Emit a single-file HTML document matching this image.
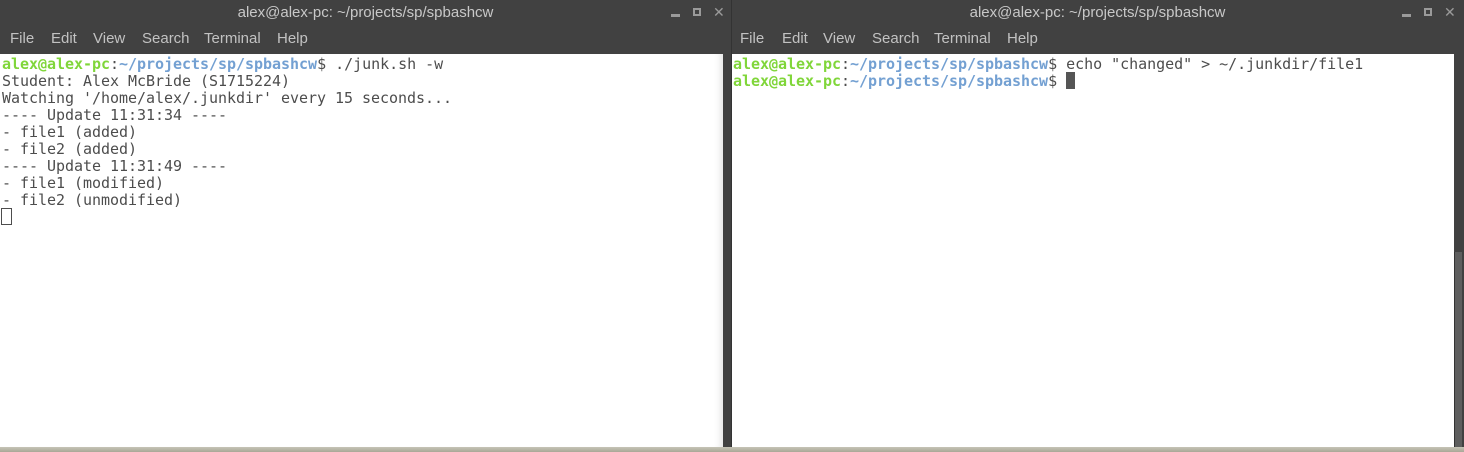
<!DOCTYPE html>
<html><head><meta charset="utf-8"><style>
*{margin:0;padding:0;box-sizing:border-box}
body{width:1464px;height:452px;overflow:hidden;background:#3f3f3f;position:relative;font-family:"Liberation Sans","DejaVu Sans",sans-serif}
.win{position:absolute;top:0;height:447px;background:#414141}
.title{position:absolute;top:0;left:0;right:0;height:27px;line-height:25px;text-align:center;color:#c8c8c8;font-size:15px}
.menu{position:absolute;top:27px;left:0;height:27px;line-height:24px;color:#c2c2c2;font-size:15px}
.menu span{position:absolute;white-space:nowrap}
.term{position:absolute;top:54px;bottom:0;left:0;background:#fff;font-family:"DejaVu Sans Mono","Liberation Mono",monospace;font-size:15px;line-height:17px;color:#4d4d4d;white-space:pre;padding:2px 0 0 2px;letter-spacing:-0.03px}
.g{color:#80d63a;font-weight:bold}.b{color:#73a0d2;font-weight:bold}
.btn{position:absolute;background:#9a9a9a}
.strip{position:absolute;left:0;top:447px;width:1464px;height:5px;background:linear-gradient(#c6c4b6,#a9a797)}
</style></head><body>
<div class="win" style="left:0;width:731px">
 <div class="title">alex@alex-pc: ~/projects/sp/spbashcw</div>
 <div class="btn" style="left:671px;top:14px;width:9px;height:3px"></div>
 <div class="btn" style="left:693px;top:8px;width:8px;height:8px;background:none;border:2px solid #9a9a9a"></div>
 <div style="position:absolute;left:713px;top:4px;color:#9a9a9a;font-size:14px;font-weight:bold">✕</div>
 <div class="menu"><span style="left:10px">File</span><span style="left:51px">Edit</span><span style="left:93px">View</span><span style="left:142px">Search</span><span style="left:204px">Terminal</span><span style="left:277px">Help</span></div>
 <div class="term" style="width:723px;box-shadow:inset -8px 0 8px -6px rgba(0,0,0,.12)"><span class="g">alex@alex-pc</span>:<span class="b">~/projects/sp/spbashcw</span>$ ./junk.sh -w
Student: Alex McBride (S1715224)
Watching '/home/alex/.junkdir' every 15 seconds...
---- Update 11:31:34 ----
- file1 (added)
- file2 (added)
---- Update 11:31:49 ----
- file1 (modified)
- file2 (unmodified)
</div>
 <div style="position:absolute;left:1px;top:208px;width:11px;height:17px;border:1px solid #4d4d4d"></div>
</div>
<div class="win" style="left:731px;width:733px">
 <div style="position:absolute;left:0;top:0;width:1px;height:447px;background:#333"></div>
 <div class="title">alex@alex-pc: ~/projects/sp/spbashcw</div>
 <div class="btn" style="left:671px;top:14px;width:9px;height:3px"></div>
 <div class="btn" style="left:693px;top:8px;width:8px;height:8px;background:none;border:2px solid #9a9a9a"></div>
 <div style="position:absolute;left:713px;top:4px;color:#9a9a9a;font-size:14px;font-weight:bold">✕</div>
 <div class="menu"><span style="left:9px">File</span><span style="left:51px">Edit</span><span style="left:92px">View</span><span style="left:141px">Search</span><span style="left:203px">Terminal</span><span style="left:276px">Help</span></div>
 <div class="term" style="left:1px;width:722px;padding-left:1px"><span class="g">alex@alex-pc</span>:<span class="b">~/projects/sp/spbashcw</span>$ echo "changed" &gt; ~/.junkdir/file1
<span class="g">alex@alex-pc</span>:<span class="b">~/projects/sp/spbashcw</span>$ </div>
 <div style="position:absolute;left:335px;top:72px;width:9px;height:17px;background:#555"></div>
 <div style="position:absolute;left:723px;top:252px;width:8px;height:195px;background:#5e5e5e;border-left:1px solid #333"></div>
</div>
<div class="strip"></div>
</body></html>
